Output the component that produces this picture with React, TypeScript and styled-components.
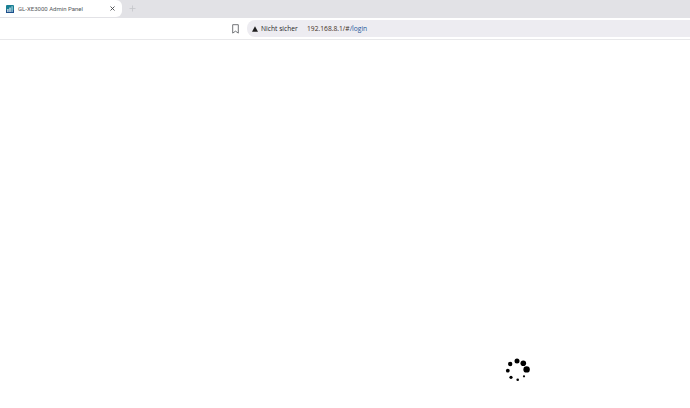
import React from "react";
import styled, { createGlobalStyle } from "styled-components";

const Global = createGlobalStyle`
  html, body { margin: 0; padding: 0; background: #fff; }
  body { width: 690px; height: 408px; overflow: hidden; font-family: "Open Sans", "Liberation Sans", sans-serif; }
`;
const Page = styled.div`
  width: 690px; height: 408px; display: flex; flex-direction: column;
`;
const TabStrip = styled.div`
  height: 18px; background: #e2e2e6; display: flex; align-items: flex-start; flex: none;
`;
const Tab = styled.div`
  width: 122px; height: 17px; background: #fff; border-radius: 0 6px 6px 0;
  display: flex; align-items: center; padding: 0 6px; box-sizing: border-box; flex: none;
`;
const Favicon = styled.svg`
  width: 8px; height: 8px; flex: none; margin-right: 4px;
`;
const TabTitle = styled.span`
  font-family: Roboto, "Open Sans", sans-serif; font-size: 6px; color: #55585c; flex: 1; white-space: nowrap;
`;
const IconSvg = styled.svg`
  display: block; flex: none;
`;
const NewTab = styled.div`
  margin: 5px 0 0 7px; width: 7px; height: 7px;
`;
const Toolbar = styled.div`
  height: 22px; background: #fff; display: flex; align-items: center; padding-left: 232px; flex: none; box-sizing: border-box;
  border-bottom: 1px solid #e8e8ea;
`;
const Bookmark = styled.div`
  width: 7px; height: 10px; margin-right: 8px; flex: none;
`;
const AddressBar = styled.div`
  flex: 1; height: 17px; background: #edecf1; border-radius: 8px 0 0 8px;
  display: flex; align-items: center; padding-left: 5px;
`;
const Warning = styled.svg`
  width: 6px; height: 6px; flex: none; margin-right: 3px;
`;
const Security = styled.span`
  font-family: "Open Sans", sans-serif; font-size: 6.7px; color: #1f1f1f; width: 46px; white-space: nowrap; flex: none;
`;
const Url = styled.span`
  font-family: "Open Sans", sans-serif; font-size: 6.7px; color: #3f2e22; white-space: nowrap;
`;
const UrlPath = styled.span`
  color: #1f5a9c;
`;
const Content = styled.main`
  flex: 1; background: #fff; padding: 318px 0 0 505px; box-sizing: border-box;
`;
const Spinner = styled.svg`
  display: block; width: 26px; height: 24px;
`;

const dots: [number, number, number][] = [
  [526.6, 368.4, 3.2], [523.3, 362.3, 2.8], [517, 360, 2.5], [510.2, 363, 2.2],
  [507.8, 369.7, 1.9], [511, 376.3, 1.6], [517.7, 378.8, 1.3], [524, 375.3, 1.1],
];

export default function App() {
  return (
    <Page>
      <Global />
      <TabStrip>
        <Tab>
          <Favicon viewBox="0 0 8 8">
            <rect width="8" height="8" rx="1" fill="#1a7f93" />
            <rect x="0" y="5" width="8" height="3" fill="#1d4f8c" />
            <rect x="1.2" y="4" width="1.4" height="3" fill="#cfe4ec" />
            <rect x="3.3" y="2.6" width="1.4" height="4.4" fill="#cfe4ec" />
            <rect x="5.4" y="1.2" width="1.4" height="5.8" fill="#8fc7d6" />
          </Favicon>
          <TabTitle>GL-XE3000 Admin Panel</TabTitle>
          <IconSvg width="7" height="7" viewBox="0 0 7 7">
            <path d="M1.5 1.5 5.5 5.5M5.5 1.5 1.5 5.5" stroke="#45484c" strokeWidth="0.9" />
          </IconSvg>
        </Tab>
        <NewTab>
          <IconSvg width="7" height="7" viewBox="0 0 7 7">
            <path d="M3.5 0.5v6M0.5 3.5h6" stroke="#c4c5c9" strokeWidth="0.8" />
          </IconSvg>
        </NewTab>
      </TabStrip>
      <Toolbar>
        <Bookmark>
          <IconSvg width="7" height="10" viewBox="0 0 7 10">
            <path d="M0.7 0.7h5.6v8.4L3.5 7.2 0.7 9.1z" fill="none" stroke="#63666a" strokeWidth="0.9" />
          </IconSvg>
        </Bookmark>
        <AddressBar>
          <Warning viewBox="0 0 6 6">
            <path d="M3 0.2 6 5.8H0z" fill="#1f1f1f" />
          </Warning>
          <Security>Nicht sicher</Security>
          <Url>192.168.8.1/#<UrlPath>/login</UrlPath></Url>
        </AddressBar>
      </Toolbar>
      <Content>
        <Spinner viewBox="505 357 26 24">
          {dots.map(([cx, cy, r]) => (
            <circle key={cx} cx={cx} cy={cy} r={r} fill="#000" />
          ))}
        </Spinner>
      </Content>
    </Page>
  );
}
